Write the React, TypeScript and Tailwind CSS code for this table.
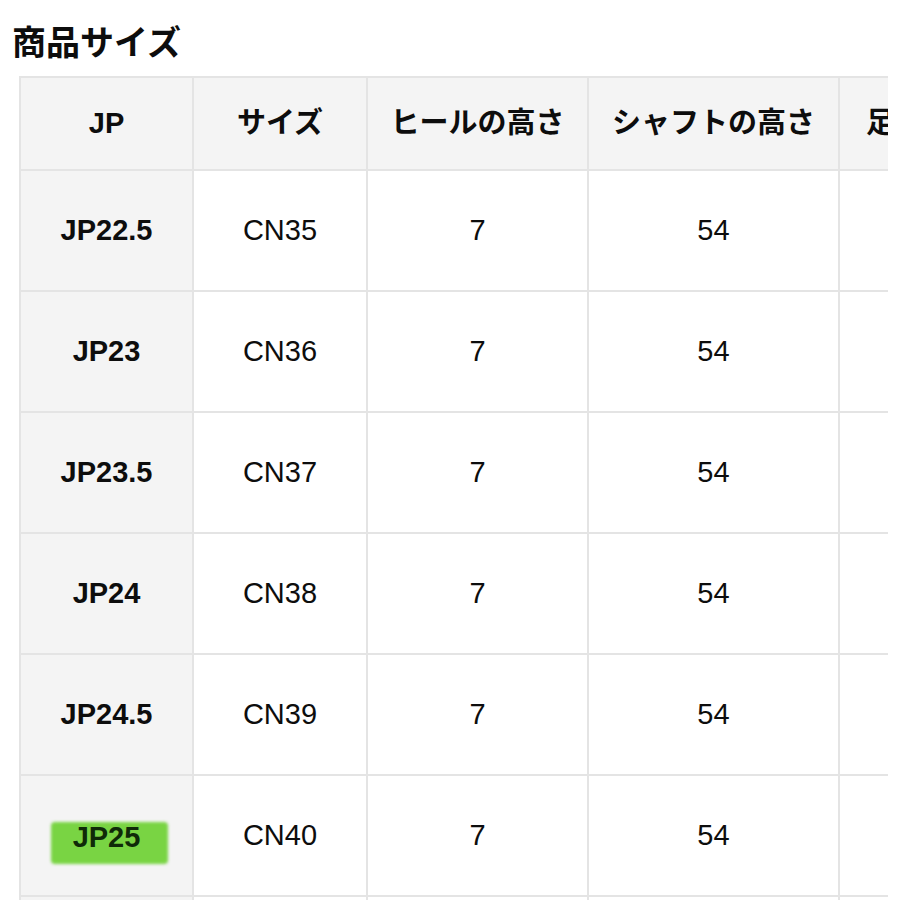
import React from "react";

const rows = [
  { jp: "JP22.5", cn: "CN35", foot: "22.5" },
  { jp: "JP23", cn: "CN36", foot: "23" },
  { jp: "JP23.5", cn: "CN37", foot: "23.5" },
  { jp: "JP24", cn: "CN38", foot: "24" },
  { jp: "JP24.5", cn: "CN39", foot: "24.5" },
  { jp: "JP25", cn: "CN40", foot: "25", hl: true },
  { jp: "JP25.5", cn: "CN41", foot: "25.5" },
];

export default function App() {
  return (
    <div
      className="w-[900px] h-[900px] overflow-hidden bg-white text-[#0d0d0d]"
      style={{ fontFamily: '"Liberation Sans", "Noto Sans CJK JP", sans-serif' }}
    >
      <h1 className="pl-[12px] pt-[23px] h-[76px] text-[34px] leading-[40px] font-bold">商品サイズ</h1>
      <div className="ml-[19px] w-[869px] overflow-hidden">
        <table className="table-fixed border-collapse w-[1038px] text-center">
          <colgroup>
            <col className="w-[173px]" />
            <col className="w-[174px]" />
            <col className="w-[221px]" />
            <col className="w-[251px]" />
            <col className="w-[219px]" />
          </colgroup>
          <thead>
            <tr className="h-[93px] bg-[#f4f4f4] text-[29px] font-bold">
              <th className="border-2 border-[#e4e4e4] font-bold">JP</th>
              <th className="border-2 border-[#e4e4e4] font-bold">サイズ</th>
              <th className="border-2 border-[#e4e4e4] font-bold">ヒールの高さ</th>
              <th className="border-2 border-[#e4e4e4] font-bold">シャフトの高さ</th>
              <th className="border-2 border-[#e4e4e4] font-bold text-left pl-[26px]">足のサイズ</th>
            </tr>
          </thead>
          <tbody className="text-[29px]">
            {rows.map((r) => (
              <tr key={r.jp} className="h-[121px]">
                <td className="border-2 border-[#e4e4e4] bg-[#f4f4f4] font-bold">
                  {r.hl ? (
                    <span className="relative inline-block leading-[34px] top-[2px]">
                      <span className="absolute left-[-22px] right-[-28px] top-[2px] bottom-[-10px] bg-[#79d443] rounded-[4px] blur-[1.5px]" />
                      <span className="relative text-[#0f2a08]">{r.jp}</span>
                    </span>
                  ) : (
                    r.jp
                  )}
                </td>
                <td className="border-2 border-[#e4e4e4]">{r.cn}</td>
                <td className="border-2 border-[#e4e4e4]">7</td>
                <td className="border-2 border-[#e4e4e4]">54</td>
                <td className="border-2 border-[#e4e4e4] text-left pl-[60px]">{r.foot}</td>
              </tr>
            ))}
          </tbody>
        </table>
      </div>
    </div>
  );
}
